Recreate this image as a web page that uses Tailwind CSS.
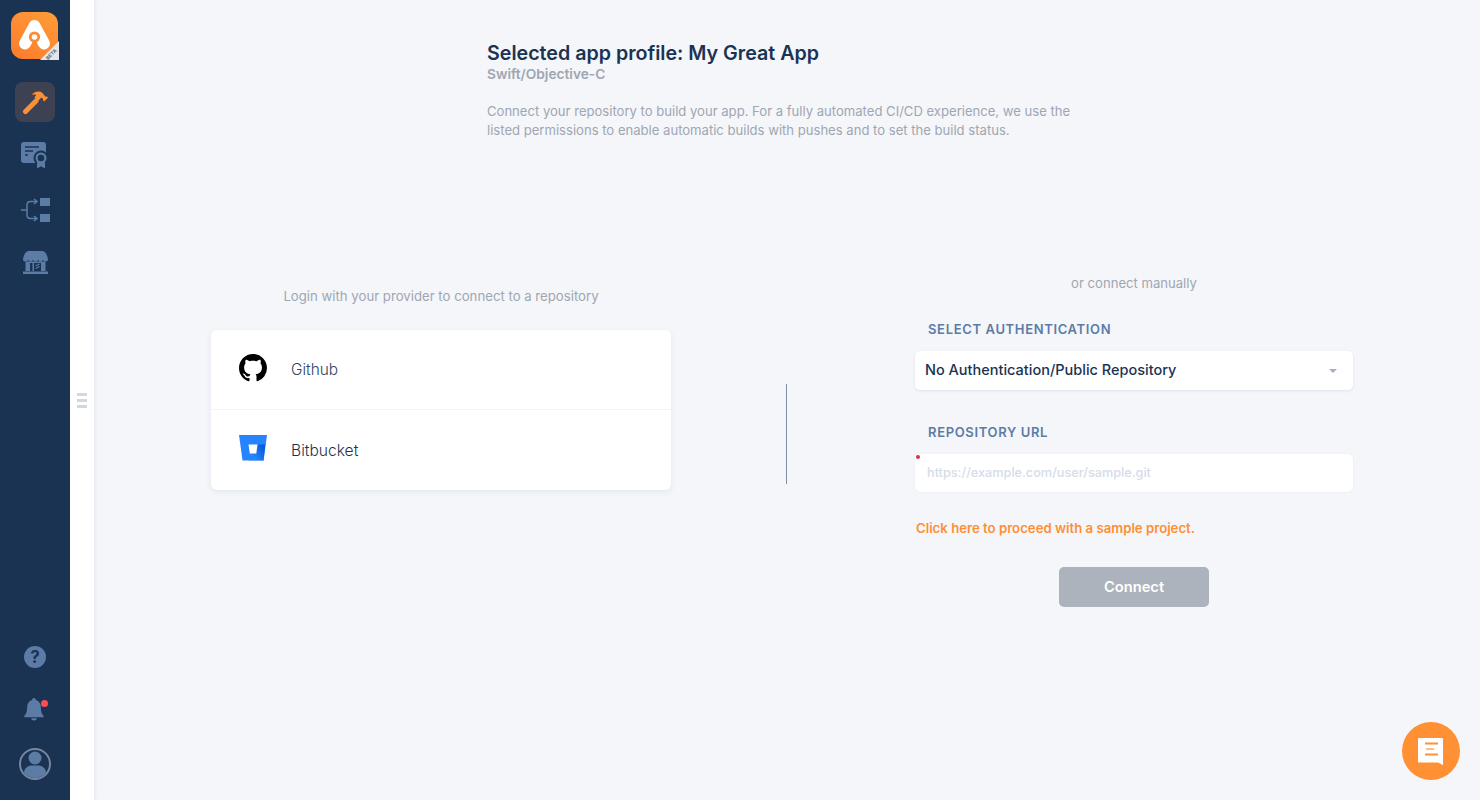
<!DOCTYPE html>
<html lang="en">
<head>
  <meta charset="UTF-8" />
  <title>Connect repository</title>
  <script src="https://cdn.jsdelivr.net/npm/@tailwindcss/browser@4"></script>
</head>
<body class="bg-[#f4f6fa] font-['Inter',sans-serif] overflow-hidden">
  <div class="flex h-[800px] w-[1480px]">

    <!-- Sidebar -->
    <aside class="w-[70px] shrink-0 bg-[#1a3353] flex flex-col items-center">
      <div class="relative mt-[12px] ml-[-2px] w-[47px] h-[47px]">
        <svg viewBox="0 0 47 47" class="w-full h-full">
          <defs>
            <linearGradient id="logo" x1="0.800" y1="0" x2="0.200" y2="1">
              <stop offset="0" stop-color="#ff9a36"/>
              <stop offset="1" stop-color="#fd7d2e"/>
            </linearGradient>
          </defs>
          <rect width="47" height="47" rx="12" fill="url(#logo)"/>
          <path d="M14 31.500 23.500 14 33 31.500" fill="none" stroke="#fff" stroke-width="12" stroke-linecap="round" stroke-linejoin="round"/>
          <circle cx="23.500" cy="25" r="5.600" fill="#fd8a30"/>
          <circle cx="23.500" cy="25" r="2.800" fill="#fff"/>
        </svg>
        <div class="absolute right-[-1px] bottom-[-1px] w-0 h-0 border-l-[19px] border-l-transparent border-b-[19px] border-b-[#e4e6ea]"></div>
        <span class="absolute right-[0px] bottom-[2px] text-[5px] leading-none font-bold text-[#5c6f8a] -rotate-45">BETA</span>
      </div>

      <div class="mt-[23px] w-[40px] h-[40px] rounded-[8px] bg-[#3e4152] flex items-center justify-center">
        <svg viewBox="0 0 26 26" class="w-[26px] h-[26px]" fill="#ff8f33">
          <path d="M3.500 22.500 14 12" stroke="#ff8f33" stroke-width="5" stroke-linecap="round"/>
          <path d="M9.500 6C12.500 2.500 17 1.800 20 3.500l3.500 4.200 1.500-.2 1 1.200-4 3.800-1-1 .2-1.500-1.800-1.400-3.400 3.400-3.500-3.500.8-1.500C15.500 5.500 13 5.200 9.500 6z"/>
        </svg>
      </div>

      <svg viewBox="0 0 28 28" class="mt-[19px] w-[28px] h-[28px]" fill="#5c7ca6">
        <rect x="0" y="1" width="25" height="21" rx="3"/>
        <path d="M4 6h14M4 10h8M4 14h3" stroke="#1a3353" stroke-width="1.500" fill="none"/>
        <circle cx="20" cy="17" r="7.500" fill="#1a3353"/>
        <path d="M16 20h8v7.500l-4-2.300-4 2.300z"/>
        <circle cx="20" cy="17" r="4.400" fill="#1a3353" stroke="#5c7ca6" stroke-width="2.200"/>
      </svg>

      <svg viewBox="0 0 29 24" class="mt-[29px] w-[29px] h-[24px]" fill="none" stroke="#5c7ca6" stroke-width="1.500">
        <path d="M0 12h6M15 3.500H9.500Q6 3.500 6 7v10q0 3.500 3.500 3.500H15"/>
        <path d="M13 1l3 2.500-3 2.500M13 18l3 2.500-3 2.500"/>
        <rect x="19" y="0" width="10" height="8" fill="#5c7ca6" stroke="none"/>
        <rect x="19" y="16" width="10" height="8" fill="#5c7ca6" stroke="none"/>
      </svg>

      <svg viewBox="0 0 25 23" class="mt-[29px] w-[25px] h-[23px]" fill="#5c7ca6">
        <path d="M5 0h15c2.500 1 4.500 4 5 8.500 0 1-1 2-2.400 2-1.100 0-2.100-.7-2.600-1.500-.5.800-1.500 1.500-2.500 1.500s-2-.7-2.500-1.500c-.5.800-1.500 1.500-2.500 1.500S10.500 9.800 10 9c-.5.800-1.500 1.500-2.500 1.500S5.500 9.800 5 9c-.5.800-1.400 1.500-2.500 1.500C1 10.500 0 9.500 0 8.500.5 4 2.500 1 5 0z"/>
        <path d="M2.500 10.500h20V20h-20z"/>
        <path d="M7 12h2.500v8H7z" fill="#1a3353"/>
        <path d="M11 12h7v8h-7z" fill="#1a3353"/>
        <path d="M12.500 15l4-2M12.500 17.500l4-2" stroke="#5c7ca6" stroke-width="1.200" fill="none"/>
        <path d="M0 20.500h25V23H0z"/>
      </svg>

      <div class="mt-auto flex flex-col items-center">
        <div class="w-[22px] h-[22px] rounded-full bg-[#5c7ca6] flex items-center justify-center text-[#1a3353] text-[17px] leading-none font-bold">?</div>
        <div class="relative mt-[30px] ml-[-2px] w-[22px] h-[24px]">
          <svg viewBox="0 0 24 26" class="w-full h-full" fill="#5c7ca6">
            <path d="M12 0c1.200 0 2 .8 2 2 3.600 1 5.500 4 5.500 8 0 5 1 7 3 9.500.4.600 0 1.500-.8 1.500H2.300c-.8 0-1.200-.9-.8-1.500C3.500 17 4.500 15 4.500 10c0-4 1.900-7 5.500-8 0-1.200.8-2 2-2z"/>
            <path d="M9 22h6c0 1.500-1.300 2.500-3 2.500S9 23.500 9 22z"/>
          </svg>
          <div class="absolute top-[2px] right-[-3px] w-[7px] h-[7px] rounded-full bg-[#ff4d4f]"></div>
        </div>
        <div class="mt-[26px] mb-[20px] w-[32px] h-[32px] rounded-full border-2 border-[#77879d] overflow-hidden">
          <svg viewBox="0 0 28 28" class="w-full h-full" fill="#5c7ca6">
            <circle cx="14" cy="8" r="6.500"/>
            <path d="M3 28v-5c0-5 4-7.500 8-7.500h6c4 0 8 2.500 8 7.500v5z"/>
          </svg>
        </div>
      </div>
    </aside>

    <!-- Collapsed panel with drag handle -->
    <div class="w-[24px] shrink-0 bg-white flex items-center justify-center shadow-[1px_0_4px_rgba(26,51,83,0.08)]">
      <div class="mt-[1px] ml-[-1px] w-[10px] flex flex-col gap-[3px]">
        <div class="h-[3px] bg-[#d3d8e0]"></div>
        <div class="h-[3px] bg-[#d3d8e0]"></div>
        <div class="h-[3px] bg-[#d3d8e0]"></div>
      </div>
    </div>

    <!-- Main -->
    <main class="relative flex-1">
      <section class="ml-[393px] pt-[42px] w-[600px]">
        <h1 class="text-[19.65px] leading-[23px] font-semibold text-[#1a3353]">Selected app profile: My Great App</h1>
        <p class="mt-[1px] text-[13.7px] leading-[16px] font-semibold text-[#a0a6b1]">Swift/Objective-C</p>
        <p class="mt-[20px] text-[13.08px] leading-[19px] text-[#a0a6b1]">Connect your repository to build your app. For a fully automated CI/CD experience, we use the listed permissions to enable automatic builds with pushes and to set the build status.</p>
      </section>

      <div class="flex items-start mt-[135px] pl-[117px]">
        <!-- Providers -->
        <section class="w-[460px] pt-[13px]">
          <p class="text-center text-[13.2px] leading-[16px] text-[#a0a6b1]">Login with your provider to connect to a repository</p>
          <div class="mt-[26px] bg-white rounded-[6px] shadow-[0_2px_6px_rgba(26,51,83,0.08)]">
            <div class="h-[80px] flex items-center pl-[28px] border-b border-[#f1f3f7]">
              <svg viewBox="0 0 16 16" class="w-[28px] h-[28px] mt-[-4px]" fill="#000">
                <path d="M8 0C3.580 0 0 3.580 0 8c0 3.540 2.290 6.530 5.470 7.590.4.070.55-.17.55-.38 0-.19-.01-.82-.01-1.490-2.010.37-2.530-.49-2.690-.94-.09-.23-.48-.94-.82-1.130-.28-.15-.68-.52-.01-.53.630-.01 1.080.58 1.230.82.720 1.210 1.870.87 2.330.66.070-.52.280-.87.510-1.070-1.780-.2-3.640-.89-3.640-3.950 0-.87.310-1.590.820-2.150-.08-.2-.36-1.020.08-2.120 0 0 .67-.21 2.200.82.640-.18 1.320-.27 2-.27s1.360.09 2 .27c1.530-1.040 2.200-.82 2.200-.82.440 1.100.16 1.920.08 2.120.51.560.82 1.270.82 2.150 0 3.070-1.870 3.750-3.650 3.950.29.250.54.730.54 1.480 0 1.070-.01 1.930-.01 2.200 0 .21.150.46.550.38A8.010 8.010 0 0 0 16 8c0-4.420-3.580-8-8-8z"/>
              </svg>
              <span class="ml-[24px] text-[15.4px] font-light text-[#2d4566]">Github</span>
            </div>
            <div class="h-[80px] flex items-center pl-[28px]">
              <svg viewBox="0 0 28 26" class="w-[28px] h-[26px] mt-[-4px]">
                <defs>
                  <linearGradient id="bb" x1="1" y1="0.300" x2="0.300" y2="0.800">
                    <stop offset="0" stop-color="#0052cc"/>
                    <stop offset="1" stop-color="#2684ff"/>
                  </linearGradient>
                </defs>
                <path d="M0 0h28l-3.400 25.500H3.500z" fill="#2684ff"/>
                <path d="M26.300 9.500 24.600 25.500H10l1-6.500h6l.9-9.500z" fill="url(#bb)" opacity=".8"/>
                <path d="M9.500 9.500h9l-1.200 9h-6.500z" fill="#fff"/>
              </svg>
              <span class="ml-[24px] mt-[2px] text-[15.6px] font-light text-[#1a3353]">Bitbucket</span>
            </div>
          </div>
        </section>

        <div class="ml-[115px] mt-[109px] w-px h-[100px] bg-[#7d8fa6]"></div>

        <!-- Manual form -->
        <section class="ml-[128px] w-[438px]">
          <p class="text-center text-[13.1px] leading-[16px] text-[#a0a6b1]">or connect manually</p>
          <label class="block mt-[30px] ml-[13px] text-[13px] leading-[16px] font-semibold tracking-[0.65px] text-[#5c7ca6]">SELECT AUTHENTICATION</label>
          <div class="mt-[14px] h-[39px] bg-white rounded-[5px] shadow-[0_1px_3px_rgba(26,51,83,0.1)] flex items-center pl-[10px] pr-[16px]">
            <span class="flex-1 pb-[2px] text-[14.5px] font-medium text-[#1a3353]">No Authentication/Public Repository</span>
            <div class="w-0 h-0 border-x-[4px] border-x-transparent border-t-[4px] border-t-[#a3afc2]"></div>
          </div>
          <label class="block mt-[34px] ml-[13px] text-[13px] leading-[16px] font-semibold tracking-[0.65px] text-[#5c7ca6]">REPOSITORY URL</label>
          <div class="relative mt-[14px] h-[38px] bg-white rounded-[5px] shadow-[0_0_2px_rgba(26,51,83,0.08)] flex items-center pl-[12px] text-[12.7px] font-medium text-[#d5dce8]">
            https://example.com/user/sample.git
            <div class="absolute left-[1px] top-[1px] w-[4px] h-[4px] rounded-full bg-[#d5363f]"></div>
          </div>
          <p class="mt-[28px] ml-[1px] text-[13.2px] leading-[16px] font-semibold text-[#ff8f33]">Click here to proceed with a sample project.</p>
          <button class="block mx-auto mt-[31px] w-[150px] h-[40px] pt-[1px] rounded-[5px] bg-[#adb3bc] text-white text-[14.7px] font-semibold">Connect</button>
        </section>
      </div>

      <!-- Chat button -->
      <button class="absolute right-[20px] bottom-[20px] w-[58px] h-[58px] rounded-full bg-[#ff9033] flex items-center justify-center">
        <svg viewBox="0 0 25 27" class="w-[25px] h-[27px] ml-[-1px]">
          <path d="M1 0h23a1 1 0 0 1 1 1v26l-5-2.500H1a1 1 0 0 1-1-1V1a1 1 0 0 1 1-1z" fill="#fff"/>
          <path d="M7 5.500h13" stroke="#ff9033" stroke-width="2"/>
          <path d="M8 11h8" stroke="#ff9033" stroke-width="2" opacity=".6"/>
          <path d="M7 16.500h13" stroke="#ff9033" stroke-width="2"/>
        </svg>
      </button>
    </main>
  </div>
</body>
</html>
